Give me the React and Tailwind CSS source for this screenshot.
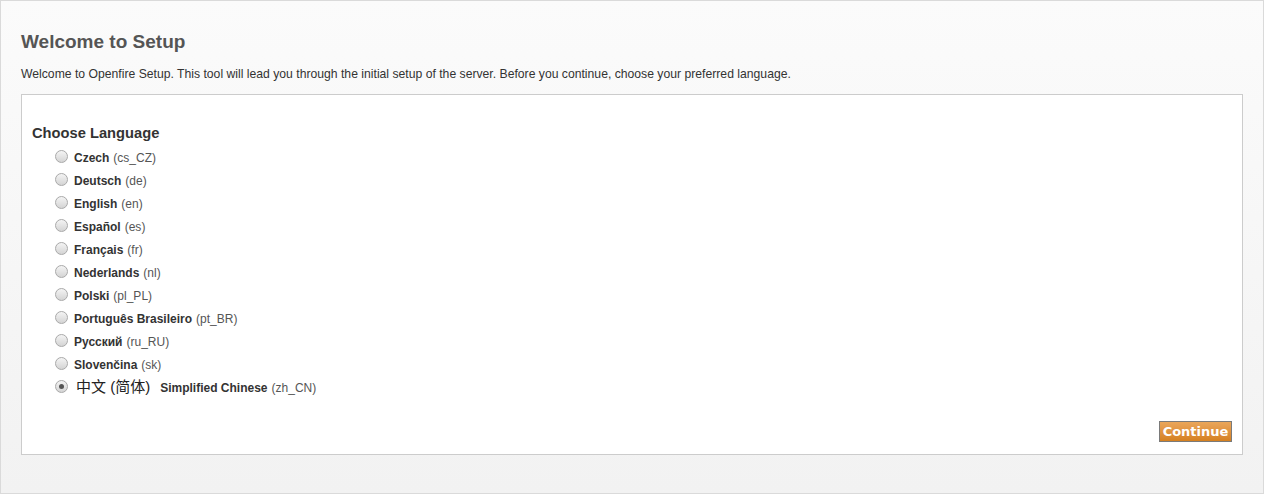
import { useState } from "react";

const languages = [
  { name: "Czech", code: "cs_CZ" },
  { name: "Deutsch", code: "de" },
  { name: "English", code: "en" },
  { name: "Español", code: "es" },
  { name: "Français", code: "fr" },
  { name: "Nederlands", code: "nl" },
  { name: "Polski", code: "pl_PL" },
  { name: "Português Brasileiro", code: "pt_BR" },
  { name: "Русский", code: "ru_RU" },
  { name: "Slovenčina", code: "sk" },
  { name: "Simplified Chinese", code: "zh_CN", native: "中文 (简体)" },
];

function Radio({ checked }) {
  return (
    <span className="mt-[-3px] flex h-[13px] w-[13px] items-center justify-center rounded-full border border-[#a9a9a9] bg-gradient-to-b from-[#f4f4f4] to-[#d4d4d4]">
      {checked && <span className="h-[5px] w-[5px] rounded-full bg-[#555]" />}
    </span>
  );
}

export default function App() {
  const [selected, setSelected] = useState("zh_CN");

  return (
    <div
      className="h-[494px] w-[1264px] border border-[#dadada] bg-gradient-to-b from-[#fbfbfb] to-[#f2f2f2] pl-[20px] pr-[20px] pt-[29px]"
      style={{ fontFamily: '"Liberation Sans", Arial, sans-serif' }}
    >
      <h1 className="h-[24px] text-[19px] font-bold leading-[24px] text-[#555]">
        Welcome to Setup
      </h1>
      <p className="mt-[12px] h-[16px] text-[12.2px] leading-[16px] text-[#333]">
        Welcome to Openfire Setup. This tool will lead you through the initial
        setup of the server. Before you continue, choose your preferred
        language.
      </p>

      <div className="mt-[12px] flex h-[361px] w-[1222px] flex-col border border-[#cccccc] bg-white pl-[10px] pr-[10px] pt-[28px]">
        <h2 className="h-[20px] text-[14.7px] font-bold leading-[20px] text-[#333]">
          Choose Language
        </h2>
        <ul className="mt-[3px] flex flex-col pl-[23px]">
          {languages.map((lang) => (
            <li
              key={lang.code}
              className="flex h-[23px] cursor-pointer items-center gap-[6px] text-[12px] text-[#333]"
              onClick={() => setSelected(lang.code)}
            >
              <Radio checked={selected === lang.code} />
              <span className="flex items-center">
                {lang.native && (
                  <span
                    className="mr-[10px] ml-[2px] text-[15px] font-normal text-[#222]"
                    style={{
                      fontFamily:
                        '"Liberation Sans", "Noto Sans CJK SC", sans-serif',
                    }}
                  >
                    {lang.native}
                  </span>
                )}
                <b className="font-bold">{lang.name}</b>
                <span className="ml-[4px] text-[#555]">({lang.code})</span>
              </span>
            </li>
          ))}
        </ul>
        <div className="mt-auto mb-[12px] flex justify-end">
          <button
            className="h-[21px] w-[73px] border border-[#7a7a7a] bg-gradient-to-b from-[#eaa65a] to-[#d5801f] text-[13px] font-bold leading-[18px] text-white"
            style={{ fontFamily: '"DejaVu Sans", Verdana, sans-serif' }}
          >
            Continue
          </button>
        </div>
      </div>
    </div>
  );
}
